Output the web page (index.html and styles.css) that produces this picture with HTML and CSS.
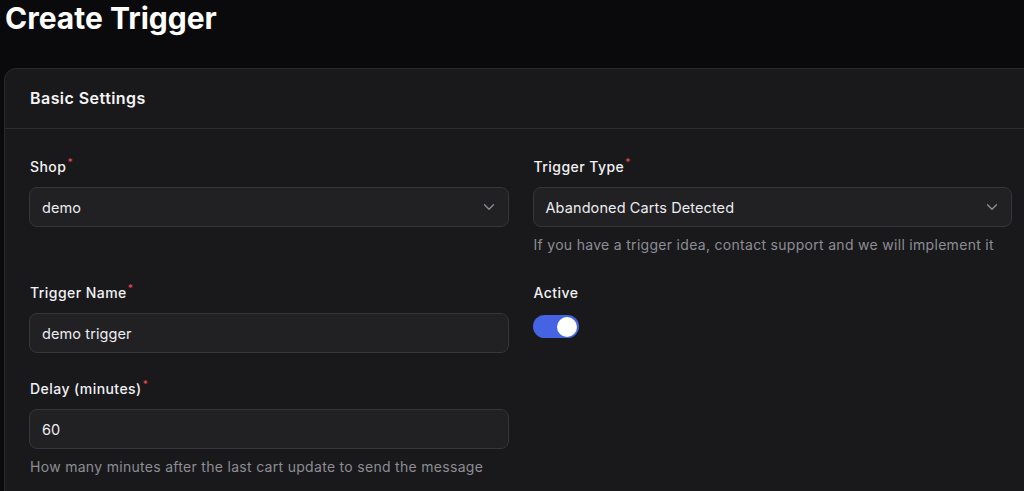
FILE: index.html
```html
<!DOCTYPE html>
<html lang="en">
<head>
<meta charset="utf-8">
<title>Create Trigger</title>
<link rel="stylesheet" href="styles.css">
</head>
<body>
<main class="page">
  <h1 class="title">Create Trigger</h1>
  <section class="card">
    <header class="card-header">Basic Settings</header>
    <div class="card-body">
      <div class="grid">
        <div class="field">
          <label class="label">Shop<span class="req">*</span></label>
          <div class="select">
            <span class="value">demo</span>
            <svg class="chev" width="12" height="8" viewBox="0 0 12 8"><path d="M1.5 1.75 6 6.25 10.5 1.75" fill="none" stroke="#8a8a92" stroke-width="1.4" stroke-linecap="round" stroke-linejoin="round"/></svg>
          </div>
        </div>
        <div class="field">
          <label class="label">Trigger Type<span class="req">*</span></label>
          <div class="select">
            <span class="value">Abandoned Carts Detected</span>
            <svg class="chev" width="12" height="8" viewBox="0 0 12 8"><path d="M1.5 1.75 6 6.25 10.5 1.75" fill="none" stroke="#8a8a92" stroke-width="1.4" stroke-linecap="round" stroke-linejoin="round"/></svg>
          </div>
          <p class="hint">If you have a trigger idea, contact support and we will implement it</p>
        </div>
        <div class="field">
          <label class="label">Trigger Name<span class="req">*</span></label>
          <div class="input"><span class="value">demo trigger</span></div>
        </div>
        <div class="field">
          <label class="label">Active</label>
          <div class="toggle"><span class="knob"></span></div>
        </div>
        <div class="field">
          <label class="label">Delay (minutes)<span class="req">*</span></label>
          <div class="input"><span class="value">60</span></div>
          <p class="hint">How many minutes after the last cart update to send the message</p>
        </div>
      </div>
    </div>
  </section>
</main>
</body>
</html>
```

FILE: styles.css
```css
html, body {
  margin: 0;
  padding: 0;
  overflow: hidden;
  background: #0a0a0c;
  height: 100%;
}
body {
  font-family: Inter, "Noto Sans", sans-serif;
  color: #f1f1f3;
}
.page {
  padding: 0 0 0 4px;
  width: 1033px;
}
.title {
  margin: 0 0 32px 0;
  padding-left: 1px;
  font-size: 30px;
  line-height: 36px;
  font-weight: 700;
  letter-spacing: 0;
  color: #ffffff;
}
.card {
  width: 1033px;
  box-sizing: border-box;
  background: #19191c;
  border: 1px solid #2a2a2e;
  border-radius: 12px;
}
.card-header {
  padding: 17px 24px 18px 25px;
  font-size: 16px;
  line-height: 24px;
  font-weight: 600;
  letter-spacing: 0.45px;
  color: #f4f4f5;
  border-bottom: 1px solid #2c2c30;
}
.card-body {
  padding: 26px 24px 24px;
}
.grid {
  display: grid;
  grid-template-columns: 1fr 1fr;
  column-gap: 24px;
  row-gap: 24px;
  align-items: start;
}
.field {
  display: flex;
  flex-direction: column;
  align-items: flex-start;
}
.label {
  font-size: 14px;
  line-height: 24px;
  font-weight: 500;
  letter-spacing: 0.45px;
  padding-left: 1px;
  color: #f1f1f3;
  margin-bottom: 8px;
}
.req {
  color: #e5484d;
  font-size: 10px;
  vertical-align: top;
  line-height: 14px;
  margin-left: 1px;
}
.select, .input {
  box-sizing: border-box;
  width: 100%;
  height: 40px;
  background: #212124;
  border: 1px solid #35353a;
  border-radius: 8px;
  display: flex;
  align-items: center;
  justify-content: space-between;
  padding: 0 13px 0 12px;
}
.value {
  font-size: 14.5px;
  letter-spacing: 0.1px;
  color: #ececef;
}
.chev {
  display: block;
}
.hint {
  margin: 6px 0 0;
  padding-left: 1px;
  font-size: 14px;
  line-height: 24px;
  letter-spacing: 0.3px;
  color: #8d8d93;
}
.toggle {
  margin-top: 2px;
  width: 46px;
  height: 23px;
  border-radius: 12px;
  background: #4563e3;
  display: flex;
  align-items: center;
  justify-content: flex-end;
  padding: 0 2px;
  box-sizing: border-box;
}
.knob {
  width: 20px;
  height: 20px;
  border-radius: 50%;
  background: #ffffff;
}
```
